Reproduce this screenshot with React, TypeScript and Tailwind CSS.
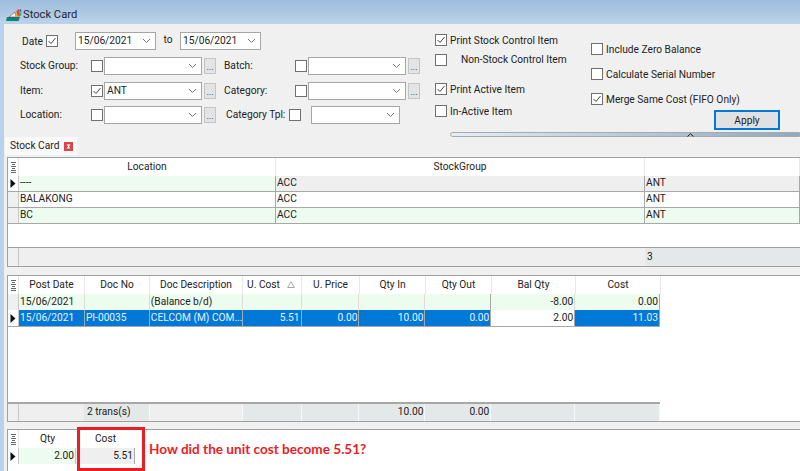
import type { ReactNode } from "react";

function Check({ on = false, className = "" }: { on?: boolean; className?: string }) {
  return (
    <span className={`flex h-[12px] w-[12px] shrink-0 items-center justify-center border border-[#707070] bg-white ${className}`}>
      {on && (
        <svg width="10" height="10" viewBox="0 0 10 10" fill="none" stroke="#444" strokeWidth="1">
          <path d="M1.5 5 L4 7.5 L8.5 2" />
        </svg>
      )}
    </span>
  );
}

function Combo({ value = "", width }: { value?: string; width: string }) {
  return (
    <span className={`flex h-[18px] ${width} shrink-0 items-center justify-between border border-[#a6a6a6] bg-white pl-[2px] pr-[5px]`}>
      <span>{value}</span>
      <svg width="7" height="4" viewBox="0 0 7 4" fill="none" stroke="#777" strokeWidth="1">
        <path d="M0 0 L3.5 3.5 L7 0" />
      </svg>
    </span>
  );
}

function Dots() {
  return (
    <span className="ml-[2px] flex h-[16px] w-[12px] shrink-0 items-end justify-center border border-[#c4c4c4] bg-[#e4e4e4] pb-[3px] text-[9px] leading-[6px]">
      ...
    </span>
  );
}

function FilterRow({
  label,
  item,
  on,
  right,
  mt,
}: {
  label: string;
  item?: string;
  on?: boolean;
  right: ReactNode;
  mt: string;
}) {
  return (
    <div className={`flex items-center ${mt}`}>
      <span className="w-[71px] shrink-0">{label}</span>
      <Check on={on} className="mr-px" />
      <Combo value={item} width="w-[98px]" />
      <Dots />
      {right}
    </div>
  );
}

function Opt({ label, on, className = "" }: { label: string; on?: boolean; className?: string }) {
  return (
    <div className={`flex items-center ${className}`}>
      <Check on={on} className="mr-[3px]" />
      <span className="whitespace-nowrap pt-[2px]">{label}</span>
    </div>
  );
}

function Indicator({ arrow, cls = "bg-[#f0f0f0]" }: { arrow?: boolean; cls?: string }) {
  return (
    <div className={`flex w-[11px] shrink-0 items-center justify-center border-r border-[#c8c8c8] ${cls}`}>
      {arrow && (
        <svg width="6" height="9" viewBox="0 0 6 9">
          <path d="M0.5 0 L5.5 4.5 L0.5 9 Z" fill="#111" />
        </svg>
      )}
    </div>
  );
}

function GridCorner() {
  return (
    <div className="flex w-[11px] shrink-0 flex-col items-center justify-center gap-px border-r border-[#e4e4e4]">
      {[5, 3, 5, 3, 5, 5].map((w, i) => (
        <span key={i} className="h-px bg-[#666]" style={{ width: w }} />
      ))}
    </div>
  );
}

type Col = { title: string; w: string; sort?: boolean };

const upper: Col[] = [
  { title: "Location", w: "w-[257px]" },
  { title: "StockGroup", w: "w-[369px]" },
  { title: "", w: "flex-1" },
];

const lower: Col[] = [
  { title: "Post Date", w: "w-[66px]" },
  { title: "Doc No", w: "w-[65px]" },
  { title: "Doc Description", w: "w-[93px]" },
  { title: "U. Cost", w: "w-[59px]", sort: true },
  { title: "U. Price", w: "w-[58px]" },
  { title: "Qty In", w: "w-[66px]" },
  { title: "Qty Out", w: "w-[66px]" },
  { title: "Bal Qty", w: "w-[84px]" },
  { title: "Cost", w: "w-[85px]" },
];

function Header({ cols }: { cols: Col[] }) {
  return (
    <div className="flex h-[18px] shrink-0 bg-white">
      <GridCorner />
      {cols.map((c) => (
        <div
          key={c.title || "x"}
          className={`relative flex items-center justify-center border-r border-[#e8e8e8] ${c.sort ? "pr-[17px]" : ""} ${c.w}`}
        >
          {c.title}
          {c.sort && (
            <svg className="absolute right-[6px] top-[5px]" width="8" height="7" viewBox="0 0 8 7" fill="none" stroke="#aaa">
              <path d="M4 0.8 L7.4 6.5 H0.6 Z" />
            </svg>
          )}
        </div>
      ))}
    </div>
  );
}

const upperRows = [
  { loc: "----", bg: "bg-[#edfcee]", second: "bg-[#efefef]", arrow: true },
  { loc: "BALAKONG", bg: "bg-white", second: "bg-white", arrow: false },
  { loc: "BC", bg: "bg-[#edfcee]", second: "bg-[#edfcee]", arrow: false },
];

function Cell({ children, w, right, cls = "" }: { children?: ReactNode; w: string; right?: boolean; cls?: string }) {
  return (
    <div
      className={`flex items-center overflow-hidden whitespace-nowrap border-r border-[#a8a8a8] px-[1px] ${
        right ? "justify-end" : ""
      } ${w} ${cls}`}
    >
      {children}
    </div>
  );
}

export default function App() {
  const w = lower.map((c) => c.w);
  return (
    <div className="relative flex h-[471px] w-[800px] flex-col overflow-hidden bg-[#b9d1ea] font-['Roboto',sans-serif] text-[10.2px] leading-none text-[#222]">
      <div className="flex h-[24px] shrink-0 items-center bg-gradient-to-b from-[#9dbcdc] to-[#bcd3ea] pl-[6px] pt-[6px] text-[11.2px] text-[#1c2733]">
        <svg width="16" height="14" viewBox="0 0 16 14" className="mr-[1px]">
          <path d="M1 9 H14 L12.500 13 H0 Z" fill="#14807a" />
          <path d="M3 9 L9 4 L10 9 Z" fill="#f4f4f4" stroke="#444" strokeWidth="0.5" />
          <path d="M9 9 L11 2 L12 9 Z" fill="#e8b020" />
          <path d="M10.500 3 L12.500 1 L14 5 L12 9 Z" fill="#d9473f" />
          <path d="M12.500 9 L14 4 L15.500 7 Z" fill="#3f9e49" />
          <path d="M13 2 L15 1 L15.500 5 Z" fill="#3a62c9" />
        </svg>
        Stock Card
      </div>

      <div className="ml-[4px] flex min-h-0 flex-1 flex-col bg-[#f0f0f0]">
        <div className="flex h-[108px] shrink-0">
          <div className="w-[421px] shrink-0 pl-[16px] pt-[8px]">
            <div className="flex h-[18px] items-center pl-[2px]">
              <span className="w-[24px] pt-[2px]">Date</span>
              <Check on />
              <span className="w-[17px]" />
              <Combo value="15/06/2021" width="w-[81px]" />
              <span className="w-[24px] pb-[2px] text-center">to</span>
              <Combo value="15/06/2021" width="w-[81px]" />
            </div>
            <FilterRow
              label="Stock Group:"
              mt="mt-[7px]"
              right={
                <>
                  <span className="w-[79px] shrink-0 pl-[8px]">Batch:</span>
                  <Check className="mr-px" />
                  <Combo width="w-[98px]" />
                  <Dots />
                </>
              }
            />
            <FilterRow
              label="Item:"
              item="ANT"
              on
              mt="mt-[7px]"
              right={
                <>
                  <span className="w-[79px] shrink-0 pl-[8px]">Category:</span>
                  <Check className="mr-px" />
                  <Combo width="w-[98px]" />
                  <Dots />
                </>
              }
            />
            <FilterRow
              label="Location:"
              mt="mt-[6px]"
              right={
                <>
                  <span className="w-[73px] shrink-0 whitespace-nowrap pl-[10px]">Category Tpl:</span>
                  <Check />
                  <span className="w-[10px]" />
                  <Combo width="w-[89px]" />
                </>
              }
            />
          </div>

          <div className="w-[156px] shrink-0 pl-[10px] pt-[10px]">
            <Opt label="Print Stock Control Item" on className="h-[12px]" />
            <div className="mt-[8px] flex h-[12px] items-center">
              <Check />
              <span className="ml-[14px] whitespace-nowrap">Non-Stock Control Item</span>
            </div>
            <Opt label="Print Active Item" on className="mt-[17px] h-[12px]" />
            <Opt label="In-Active Item" className="mt-[10px] h-[12px]" />
          </div>

          <div className="flex-1 pl-[10px] pt-[19px]">
            <Opt label="Include Zero Balance" className="h-[12px]" />
            <Opt label="Calculate Serial Number" className="mt-[13px] h-[12px]" />
            <Opt label="Merge Same Cost (FIFO Only)" on className="mt-[13px] h-[12px]" />
            <div className="ml-[123px] mt-[5px] flex h-[20px] w-[66px] items-center justify-center border-2 border-[#0078d7] bg-[#e1e1e1] pt-[2px]">
              Apply
            </div>
          </div>
        </div>

        <div className="relative ml-[446px] h-[5px] shrink-0 rounded-l-sm border border-[#a9a9a9] bg-gradient-to-r from-[#e4eef7] to-[#8fa9c0]">
          <svg className="absolute left-[236px] top-0" width="7" height="4" viewBox="0 0 7 4" fill="none" stroke="#222">
            <path d="M0.500 3.500 L3.500 0.800 L6.500 3.500" />
          </svg>
        </div>

        <div className="flex h-[18px] shrink-0 items-stretch">
          <div className="ml-px flex w-[72px] items-center justify-between bg-[#f9f9f9] pl-[5px] pr-[4px]">
            <span>Stock Card</span>
            <svg width="9" height="9" viewBox="0 0 9 9">
              <rect width="9" height="9" fill="#d6474c" />
              <path d="M2.500 2.500 H6.500 L5 4.500 L6.500 6.500 H2.500 L4 4.500 Z" fill="#fff" />
            </svg>
          </div>
        </div>

        <div className="ml-[3px] mt-[2px] flex h-[110px] shrink-0 flex-col border-l border-t border-[#a0a0a0] bg-white">
          <Header cols={upper} />
          {upperRows.map((r) => (
            <div key={r.loc} className={`flex h-[16px] shrink-0 border-b border-[#a8a8a8] ${r.bg}`}>
              <Indicator arrow={r.arrow} cls={r.arrow ? "bg-white" : "bg-[#f0f0f0]"} />
              <Cell w="w-[257px]">{r.loc}</Cell>
              <Cell w="w-[369px]" cls={r.second}>ACC</Cell>
              <Cell w="flex-1" cls={r.second}>ANT</Cell>
            </div>
          ))}
          <div className="min-h-0 flex-1" />
          <div className="flex h-[20px] shrink-0 border-y border-[#a0a0a0] bg-[#efefef]">
            <Indicator />
            <div className="w-[626px]" />
            <div className="flex flex-1 items-center bg-[#e5e8e9] pl-[2px]">3</div>
          </div>
        </div>

        <div className="ml-[3px] mt-[8px] flex h-[147px] shrink-0 flex-col border-b border-l border-t border-[#a0a0a0] bg-white">
          <Header cols={lower} />
          <div className="flex h-[16px] w-[652px] shrink-0 bg-[#edfcee]">
            <Indicator />
            <Cell w={w[0]} cls="border-[#dcdcdc]">15/06/2021</Cell>
            <Cell w={w[1]} cls="border-[#dcdcdc]" />
            <Cell w={w[2]} cls="border-[#dcdcdc]">(Balance b/d)</Cell>
            <Cell w={w[3]} cls="border-[#dcdcdc]" />
            <Cell w={w[4]} cls="border-[#dcdcdc]" />
            <Cell w={w[5]} cls="border-[#dcdcdc]" />
            <Cell w={w[6]} cls="border-[#a8a8a8]" />
            <Cell w={w[7]} right cls="border-[#dcdcdc]">-8.00</Cell>
            <Cell w={w[8]} right>0.00</Cell>
          </div>
          <div className="flex h-[17px] w-[652px] shrink-0 border-b border-[#a8a8a8] bg-[#0078d7] text-[#e8f2fb]">
            <Indicator arrow cls="bg-white" />
            <Cell w={w[0]}>15/06/2021</Cell>
            <Cell w={w[1]}>PI-00035</Cell>
            <Cell w={w[2]}>CELCOM (M) COM...</Cell>
            <Cell w={w[3]} right>5.51</Cell>
            <Cell w={w[4]} right>0.00</Cell>
            <Cell w={w[5]} right>10.00</Cell>
            <Cell w={w[6]} right>0.00</Cell>
            <Cell w={w[7]} right cls="bg-white text-[#222]">2.00</Cell>
            <Cell w={w[8]} right>11.03</Cell>
          </div>
          <div className="min-h-0 flex-1" />
          <div className="flex h-[19px] w-[652px] shrink-0 border-t-2 border-[#a8a8a8] bg-[#efefef]">
            <Indicator />
            <Cell w={w[0]} cls="border-[#e4e4e4]" />
            <Cell w={w[1]} cls="border-[#f8f8f8] bg-[#e5e8e9] pl-[2px]">2 trans(s)</Cell>
            <Cell w={w[2]} cls="border-[#f8f8f8]" />
            <Cell w={w[3]} cls="border-[#f8f8f8] bg-[#e5e8e9]" />
            <Cell w={w[4]} cls="border-[#f8f8f8] bg-[#e5e8e9]" />
            <Cell w={w[5]} right cls="border-[#f8f8f8] bg-[#e5e8e9]">10.00</Cell>
            <Cell w={w[6]} right cls="border-[#f8f8f8] bg-[#e5e8e9]">0.00</Cell>
            <Cell w={w[7]} cls="border-[#f8f8f8] bg-[#e5e8e9]" />
            <Cell w={w[8]} cls="border-[#f8f8f8] bg-[#e5e8e9]" />
          </div>
        </div>

        <div className="ml-[3px] mt-[7px] flex min-h-0 flex-1 flex-col border-l border-t border-[#a0a0a0] bg-white">
          <div className="flex h-[18px] shrink-0">
            <GridCorner />
            <div className="flex w-[57px] items-center justify-center">Qty</div>
            <div className="flex w-[59px] items-center justify-center">Cost</div>
          </div>
          <div className="flex h-[16px] shrink-0">
            <Indicator arrow cls="bg-white" />
            <Cell w="w-[57px]" right cls="border-[#c8c8c8] bg-[#edfcee]">2.00</Cell>
            <Cell w="w-[59px]" right cls="bg-[#efefef]">5.51</Cell>
          </div>
        </div>
      </div>

      {/* red annotation drawn over the screenshot */}
      <div className="pointer-events-none absolute left-[77px] top-[427px] h-[44px] w-[68px] border-[3px] border-[#ed1c24]" />
      <span className="absolute left-[149px] top-[443px] whitespace-nowrap font-['Lato',sans-serif] text-[13.6px] font-bold text-[#ed1c24]">
        How did the unit cost become 5.51?
      </span>
    </div>
  );
}
